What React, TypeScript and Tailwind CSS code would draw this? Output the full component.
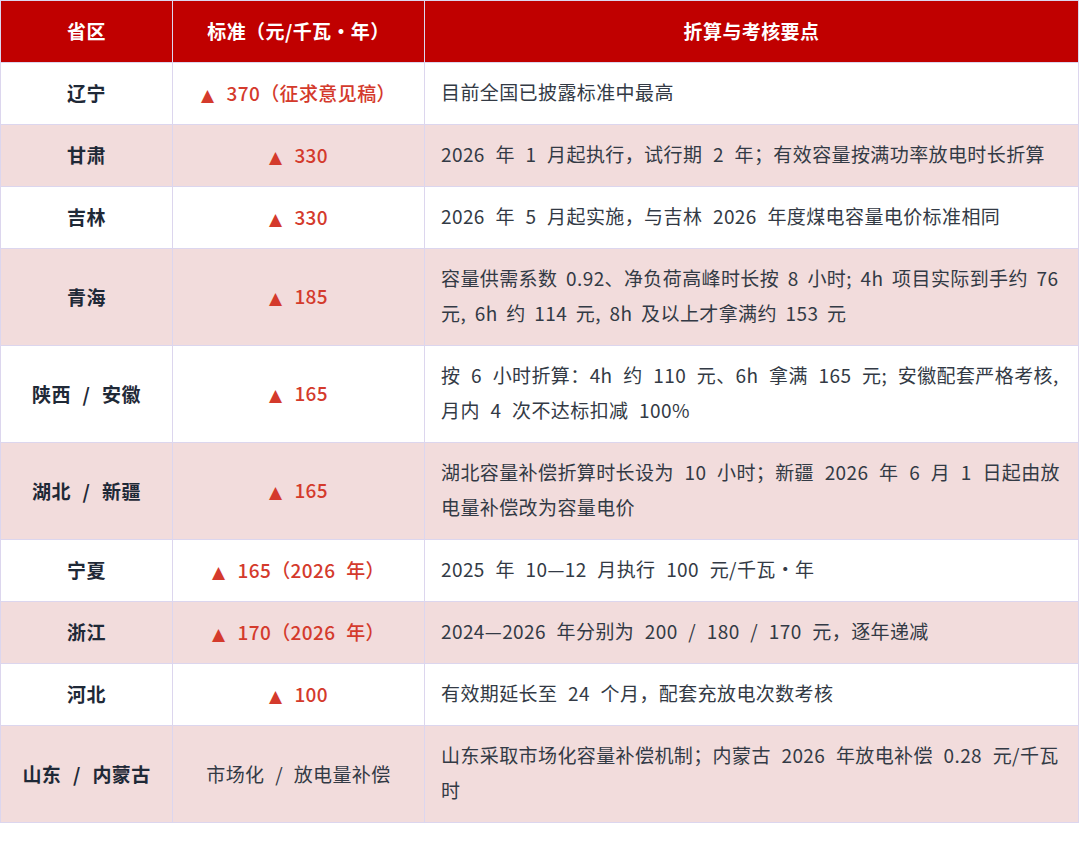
const rows: { prov: string; std: string; note: string; red?: boolean; ws?: string }[] = [
  { prov: "辽宁", std: "370（征求意见稿）", note: "目前全国已披露标准中最高", red: true },
  { prov: "甘肃", std: "330", note: "2026 年 1 月起执行，试行期 2 年；有效容量按满功率放电时长折算", red: true },
  { prov: "吉林", std: "330", note: "2026 年 5 月起实施，与吉林 2026 年度煤电容量电价标准相同", red: true },
  {
    prov: "青海",
    std: "185",
    note: "容量供需系数 0.92、净负荷高峰时长按 8 小时; 4h 项目实际到手约 76 元, 6h 约 114 元, 8h 及以上才拿满约 153 元",
    red: true,
    ws: "[word-spacing:4px]",
  },
  {
    prov: "陕西 / 安徽",
    std: "165",
    note: "按 6 小时折算：4h 约 110 元、6h 拿满 165 元; 安徽配套严格考核, 月内 4 次不达标扣减 100%",
    red: true,
  },
  {
    prov: "湖北 / 新疆",
    std: "165",
    note: "湖北容量补偿折算时长设为 10 小时；新疆 2026 年 6 月 1 日起由放电量补偿改为容量电价",
    red: true,
  },
  { prov: "宁夏", std: "165（2026 年）", note: "2025 年 10—12 月执行 100 元/千瓦·年", red: true },
  { prov: "浙江", std: "170（2026 年）", note: "2024—2026 年分别为 200 / 180 / 170 元，逐年递减", red: true },
  { prov: "河北", std: "100", note: "有效期延长至 24 个月，配套充放电次数考核", red: true },
  {
    prov: "山东 / 内蒙古",
    std: "市场化 / 放电量补偿",
    note: "山东采取市场化容量补偿机制；内蒙古 2026 年放电补偿 0.28 元/千瓦时",
  },
];

export default function App() {
  return (
    <div
      className="w-[1080px] h-[855px] bg-white"
      style={{ fontFamily: '"Noto Sans CJK SC", "Noto Sans", sans-serif' }}
    >
      <table className="w-[1079px] border-collapse table-fixed text-[19px] tracking-[0.4px]">
        <colgroup>
          <col className="w-[172px]" />
          <col className="w-[252px]" />
          <col />
        </colgroup>
        <thead>
          <tr className="bg-[#c00000] text-white font-bold">
            <th className="h-[62px] border border-[#dcd6ee] text-center">省区</th>
            <th className="h-[62px] border border-[#dcd6ee] text-center">标准（元/千瓦•年）</th>
            <th className="h-[62px] border border-[#dcd6ee] text-center">折算与考核要点</th>
          </tr>
        </thead>
        <tbody>
          {rows.map((r, i) => (
            <tr key={r.prov} className={i % 2 === 1 ? "bg-[#f2dcdc]" : "bg-white"}>
              <td className="h-[62px] border border-[#dcd6ee] text-center font-bold text-[#1f2937] [word-spacing:7px]">
                {r.prov}
              </td>
              <td
                className={
                  "border border-[#dcd6ee] text-center [word-spacing:6px] " +
                  (r.red ? "text-[#d43a2c] font-medium" : "text-[#333a45]")
                }
              >
                {r.red && (
                  <span className="text-[17px] mr-3" style={{ fontFamily: '"DejaVu Sans", sans-serif' }}>
                    ▲
                  </span>
                )}
                {r.std}
              </td>
              <td
                className={
                  "border border-[#dcd6ee] pl-4 pr-2 pt-[11px] pb-[15px] leading-[35px] text-[#333a45] " +
                  (r.ws ?? "[word-spacing:6px]")
                }
              >
                {r.note}
              </td>
            </tr>
          ))}
        </tbody>
      </table>
    </div>
  );
}
